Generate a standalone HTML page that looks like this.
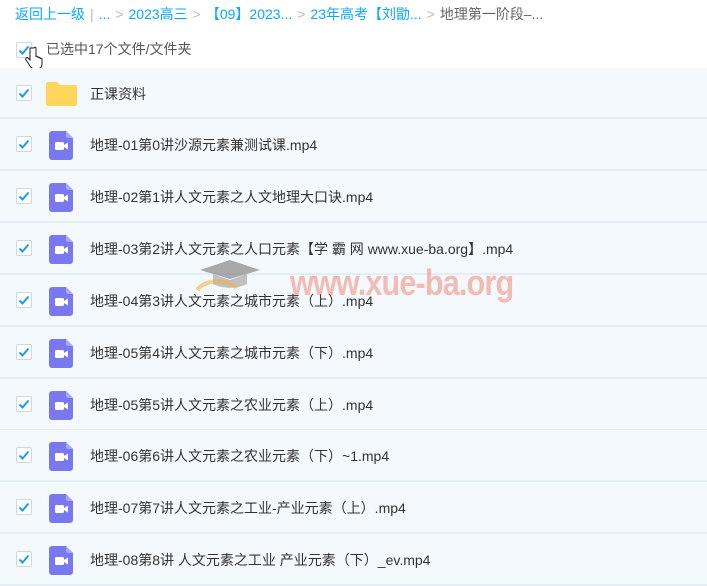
<!DOCTYPE html>
<html><head><meta charset="utf-8"><style>
*{margin:0;padding:0;box-sizing:border-box}
body{width:707px;height:576px;overflow:hidden;background:#fff;font-family:"Liberation Sans","Noto Sans CJK SC",sans-serif;position:relative}
.bc{position:absolute;top:4px;left:15px;font-size:14px;color:#09aaff;white-space:nowrap}
.bc .g{color:#bbb;margin:0 5px}
.bc .last{color:#666}
.cb{position:absolute;width:16px;height:16px;border:1px solid #d0d8e0;background:#fff;border-radius:2px}
.cb svg{position:absolute;left:1px;top:1px}
.sel{position:absolute;left:46px;top:39px;font-size:14px;color:#555}
.row{position:absolute;left:0;width:707px;height:52px;background:#f4f9fe;border-bottom:2px solid #e4eef8}
.row .cb{left:16px;top:17px}
.row .t{position:absolute;left:90px;top:16px;font-size:14px;color:#333;white-space:nowrap}
.vid{position:absolute;left:49px;top:12px;width:24px;height:29px}
.wm{position:absolute;left:290px;top:262px;font:bold 36px "Liberation Sans",sans-serif;color:rgba(240,110,90,.45);letter-spacing:-1px;transform:scaleX(.85);transform-origin:left}
</style></head><body>
<div class="bc">返回上一级<span class="g">|</span><span style="color:#09aaff">...</span><span class="g">&gt;</span>2023高三<span class="g">&gt;</span>【09】2023...<span class="g">&gt;</span>23年高考【刘勖...<span class="g">&gt;</span><span class="last">地理第一阶段–...</span></div>
<div class="cb" style="left:16px;top:42px"><svg width="12" height="12" viewBox="0 0 12 12"><path d="M1.5 6.5L4.5 9.5L10.5 2.5" stroke="#1a9cf0" stroke-width="2" fill="none"/></svg></div>
<div class="sel">已选中17个文件/文件夹</div>
<svg style="position:absolute;left:25px;top:46px" width="18" height="26" viewBox="0 0 18 26"><path d="M5 2v12l-2-2c-1-1-3 0-2 2l4 6c1 2 3 3 6 3h1c3 0 5-2 5-5v-5c0-1-2-1-2 0v-1c0-1-2-1-2 0v-1c0-1-2-1-2 0V2c0-1-2-1-2 0z" fill="#fff" stroke="#222" stroke-width="1"/></svg>
<div class="row" style="top:68px;height:51px"><div class="cb"><svg width="12" height="12" viewBox="0 0 12 12"><path d="M1.5 6.5L4.5 9.5L10.5 2.5" stroke="#1a9cf0" stroke-width="2" fill="none"/></svg></div>
<svg style="position:absolute;left:46px;top:13px" width="31" height="25" viewBox="0 0 31 25"><path d="M0 3a2 2 0 0 1 2-2h9l3 3h15a2 2 0 0 1 2 2v17a2 2 0 0 1-2 2H2a2 2 0 0 1-2-2z" fill="#ffd55c"/></svg>
<div class="t">正课资料</div></div>
<div id="rows"></div>
<div class="wm">www.xue-ba.org</div>
<svg style="position:absolute;left:195px;top:255px" width="70" height="40" viewBox="0 0 70 40"><path d="M5 15L35 5L65 15L35 24z" fill="#888" opacity=".7"/><path d="M18 19v10c10 5 24 5 34 0V19L35 25z" fill="#999" opacity=".6"/><path d="M2 35c10-12 30-10 40 -2" stroke="#f3b040" stroke-width="4" fill="none" opacity=".6"/></svg>
<script>
var n=["地理-01第0讲沙源元素兼测试课.mp4","地理-02第1讲人文元素之人文地理大口诀.mp4","地理-03第2讲人文元素之人口元素【学 霸 网 www.xue-ba.org】.mp4","地理-04第3讲人文元素之城市元素（上）.mp4","地理-05第4讲人文元素之城市元素（下）.mp4","地理-05第5讲人文元素之农业元素（上）.mp4","地理-06第6讲人文元素之农业元素（下）~1.mp4","地理-07第7讲人文元素之工业-产业元素（上）.mp4","地理-08第8讲 人文元素之工业 产业元素（下）_ev.mp4"];
var h="";n.forEach(function(t,i){h+='<div class="row" style="top:'+Math.round(119+i*51.9)+'px"><div class="cb"><svg width="12" height="12" viewBox="0 0 12 12"><path d="M1.5 6.5L4.5 9.5L10.5 2.5" stroke="#1a9cf0" stroke-width="2" fill="none"/></svg></div><svg class="vid" viewBox="0 0 24 29"><path d="M3 0h14l7 7v19a3 3 0 0 1-3 3H3a3 3 0 0 1-3-3V3a3 3 0 0 1 3-3z" fill="#7a78f0"/><path d="M17 0l7 7h-5a2 2 0 0 1-2-2z" fill="#a9a7f7"/><rect x="6" y="11" width="9" height="8" rx="1.5" fill="#fff"/><path d="M15 14l4-2.5v7L15 16z" fill="#fff"/></svg><div class="t">'+t+'</div></div>'});
document.getElementById("rows").outerHTML=h;
</script>
</body></html>
